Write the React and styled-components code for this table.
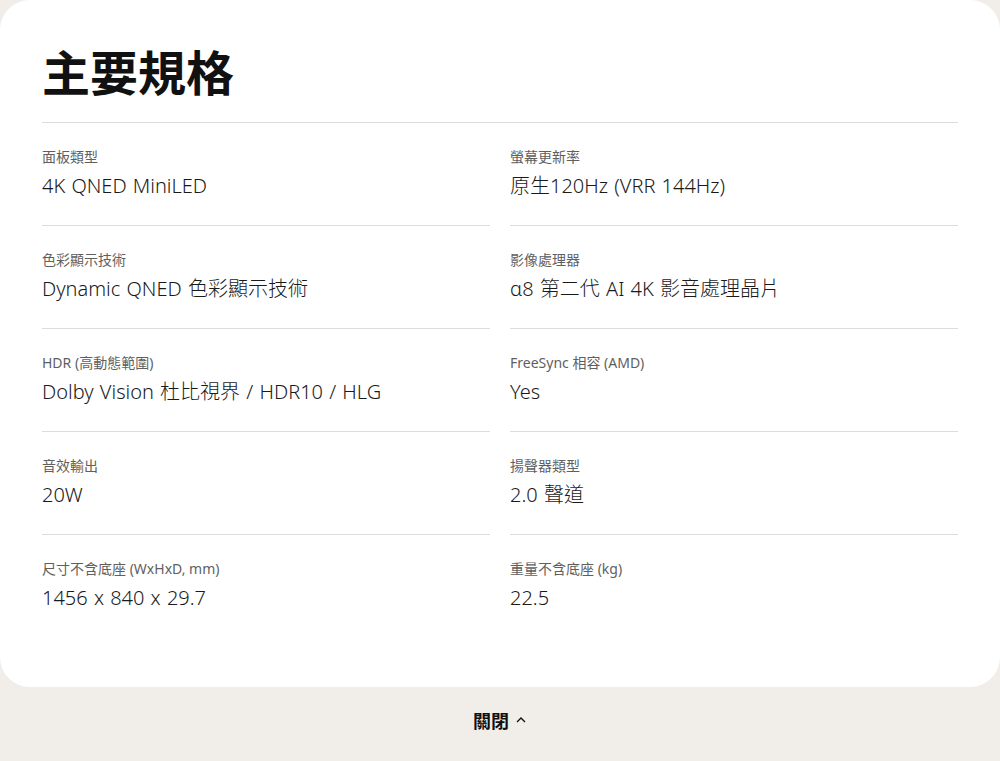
import React from 'react';
import styled, {createGlobalStyle} from 'styled-components';

const Global = createGlobalStyle`
  html, body {
    margin: 0;
    padding: 0;
    background: #f1eee9;
    font-family: "Noto Sans", "Noto Sans CJK TC", sans-serif;
    color: #1a1a1a;
  }
`;

const Page = styled.div`
  width: 1000px;
  height: 761px;
  display: flex;
  flex-direction: column;
  background: #f1eee9;
`;

const Card = styled.div`
  background: #fff;
  border-radius: 30px;
  padding: 0 42px 50px;
`;

const Title = styled.h2`
  margin: 0;
  padding: 44px 0 20px;
  font-size: 48px;
  line-height: 58px;
  font-weight: 600;
  color: #111;
  border-bottom: 1px solid #dcdcdc;
`;

const Grid = styled.div`
  display: grid;
  grid-template-columns: 1fr 1fr;
  column-gap: 20px;
`;

const Cell = styled.div`
  padding: 24px 0 25px;
  border-bottom: ${p => (p.last ? 'none' : '1px solid #dcdcdc')};
`;

const Label = styled.div`
  font-size: 14px;
  line-height: 20px;
  color: #5f5f5f;
`;

const Value = styled.div`
  margin-top: 5px;
  font-size: 20px;
  line-height: 28px;
  font-weight: 300;
  color: #1a1a1a;
  word-spacing: 1px;
`;

const Footer = styled.div`
  flex: 1;
  display: flex;
  align-items: center;
  justify-content: center;
  padding-bottom: 8px;
`;

const CloseButton = styled.button`
  border: 0;
  background: none;
  font-family: inherit;
  font-size: 18px;
  font-weight: 600;
  color: #111;
  display: flex;
  align-items: center;
  gap: 6px;
  padding: 0;
  cursor: pointer;
`;

const specs = [
  ['面板類型', '4K QNED MiniLED'],
  ['螢幕更新率', '原生120Hz (VRR 144Hz)'],
  ['色彩顯示技術', 'Dynamic QNED 色彩顯示技術'],
  ['影像處理器', 'α8 第二代 AI 4K 影音處理晶片'],
  ['HDR (高動態範圍)', 'Dolby Vision 杜比視界 / HDR10 / HLG'],
  ['FreeSync 相容 (AMD)', 'Yes'],
  ['音效輸出', '20W'],
  ['揚聲器類型', '2.0 聲道'],
  ['尺寸不含底座 (WxHxD, mm)', '1456 x 840 x 29.7'],
  ['重量不含底座 (kg)', '22.5'],
];

export default function App() {
  return (
    <Page>
      <Global />
      <Card>
        <Title>主要規格</Title>
        <Grid>
          {specs.map(([label, value], i) => (
            <Cell key={label} last={i >= specs.length - 2}>
              <Label>{label}</Label>
              <Value>{value}</Value>
            </Cell>
          ))}
        </Grid>
      </Card>
      <Footer>
        <CloseButton>
          關閉
          <svg width="12" height="12" viewBox="0 0 12 12" fill="none" stroke="#111" strokeWidth="1.4">
            <path d="M2 8 L6 4 L10 8" />
          </svg>
        </CloseButton>
      </Footer>
    </Page>
  );
}
